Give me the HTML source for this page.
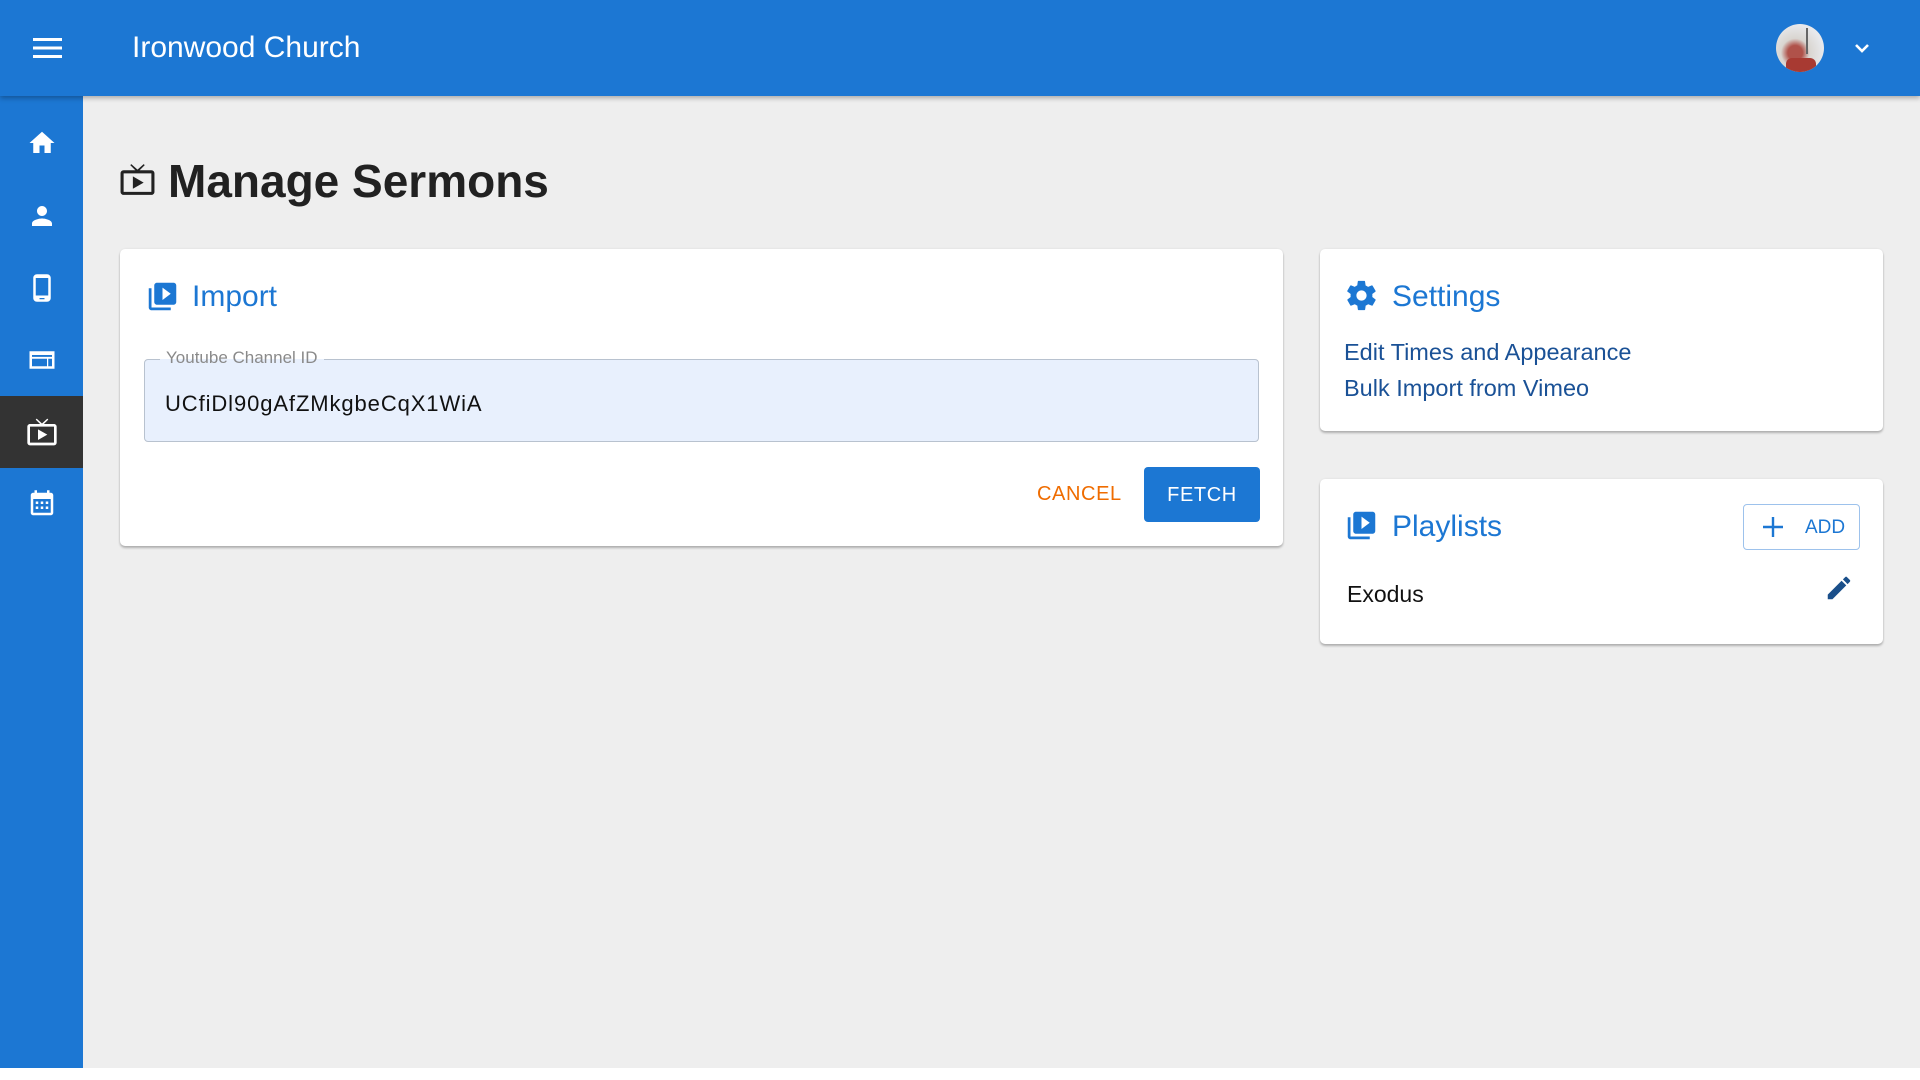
<!DOCTYPE html>
<html><head><meta charset="utf-8"><style>
*{box-sizing:border-box;margin:0;padding:0}
body{width:1920px;height:1080px;background:#fff;font-family:"Liberation Sans",sans-serif;position:relative;overflow:hidden}
.main{position:absolute;left:0;top:0;width:1920px;height:1068px;background:#eeeeee}
.hdr{position:absolute;left:0;top:0;width:1920px;height:96px;background:#1c77d3;box-shadow:0 2px 5px rgba(0,0,0,.3);z-index:2}
.side{position:absolute;left:0;top:96px;width:83px;height:972px;background:#1c77d3}
.abs{position:absolute}
.card{position:absolute;background:#fff;border-radius:5px;box-shadow:0 2px 2px rgba(0,0,0,.25),0 0 2px rgba(0,0,0,.08)}
.h{position:absolute;color:#1c77d3;font-size:30px}
.lnk{position:absolute;color:#1a5196;font-size:23.5px}
</style></head><body>
<div class="main"></div>
<div class="hdr">
 <svg class="abs" style="left:33px;top:37px" width="30" height="22" viewBox="0 0 30 22"><rect y="1" width="29" height="3" fill="#fff"/><rect y="9.5" width="29" height="3" fill="#fff"/><rect y="18" width="29" height="3" fill="#fff"/></svg>
 <div class="abs" style="left:132px;top:31px;color:#fff;font-size:30px">Ironwood Church</div>
 <div class="abs" style="left:1776px;top:24px;width:48px;height:48px;border-radius:50%;background:radial-gradient(circle at 40% 60%,#b0524a 0 18%,#d9d5d0 35%,#e8e9ec 70%);overflow:hidden"><div style="position:absolute;left:10px;top:34px;width:30px;height:14px;background:#a83a32;border-radius:6px 6px 0 0"></div><div style="position:absolute;left:30px;top:4px;width:2px;height:26px;background:#666"></div></div>
 <svg class="abs" style="left:1853px;top:41px" width="18" height="14" viewBox="0 0 18 14"><path d="M3 4l6 6 6-6" stroke="#fff" stroke-width="2.6" fill="none"/></svg>
</div>
<div class="side">
 <div class="abs" style="left:0;top:300px;width:83px;height:72px;background:#333"></div>
 <svg class="abs" style="left:27px;top:32px" width="30" height="30" viewBox="0 0 24 24"><path d="M10 20v-6h4v6h5v-8h3L12 3 2 12h3v8z" fill="#fff"/></svg>
 <svg class="abs" style="left:27px;top:105px" width="30" height="30" viewBox="0 0 24 24"><path d="M12 12c2.2 0 4-1.8 4-4s-1.8-4-4-4-4 1.8-4 4 1.8 4 4 4zm0 2c-2.7 0-8 1.3-8 4v2h16v-2c0-2.7-5.3-4-8-4z" fill="#fff"/></svg>
 <svg class="abs" style="left:27px;top:177px" width="30" height="30" viewBox="0 0 24 24"><path d="M16 1H8C6.3 1 5 2.3 5 4v16c0 1.7 1.3 3 3 3h8c1.7 0 3-1.3 3-3V4c0-1.7-1.3-3-3-3zm-2 20h-4v-1h4v1zm3-3H7V4h10v14z" fill="#fff"/></svg>
 <svg class="abs" style="left:27px;top:249px" width="30" height="30" viewBox="0 0 24 24"><path d="M2 5h20v14H2z" fill="#fff"/><path d="M4 11h12v6H4zM17 11h3v6h-3zM4 8h16v1.5H4z" fill="#1c77d3"/></svg>
 <svg class="abs" style="left:26px;top:320px" width="32" height="32" viewBox="0 0 24 24"><path d="M21 6h-7.6l3.3-3.3-.7-.7L12 5.6 8 2l-.7.7L10.6 6H3c-1.1 0-2 .9-2 2v12c0 1.1.9 2 2 2h18c1.1 0 2-.9 2-2V8c0-1.1-.9-2-2-2zm0 14H3V8h18v12zM9 10v8l7-4z" fill="#fff"/></svg>
 <svg class="abs" style="left:27px;top:393px" width="30" height="30" viewBox="0 0 24 24"><path d="M19 3h-1V1h-2v2H8V1H6v2H5C3.9 3 3 3.9 3 5v14c0 1.1.9 2 2 2h14c1.1 0 2-.9 2-2V5c0-1.1-.9-2-2-2zm0 16H5V8h14v11zM7 10h2v2H7zm4 0h2v2h-2zm4 0h2v2h-2zM7 14h2v2H7zm4 0h2v2h-2zm4 0h2v2h-2z" fill="#fff"/></svg>
</div>
<svg class="abs" style="left:119px;top:161px" width="37" height="37" viewBox="0 0 24 24"><path d="M21 6h-7.6l3.3-3.3-.7-.7L12 5.6 8 2l-.7.7L10.6 6H3c-1.1 0-2 .9-2 2v12c0 1.1.9 2 2 2h18c1.1 0 2-.9 2-2V8c0-1.1-.9-2-2-2zm0 14H3V8h18v12zM9 10v8l7-4z" fill="#222"/></svg>
<div class="abs" style="left:168px;top:154px;font-size:46px;font-weight:bold;color:#212121">Manage Sermons</div>

<div class="card" style="left:120px;top:249px;width:1163px;height:297px">
 <svg class="abs" style="left:26px;top:31px" width="33" height="33" viewBox="0 0 24 24"><path d="M4 6H2v14c0 1.1.9 2 2 2h14v-2H4V6zm16-4H8c-1.1 0-2 .9-2 2v12c0 1.1.9 2 2 2h12c1.1 0 2-.9 2-2V4c0-1.1-.9-2-2-2zm-8 12.5v-9l6 4.5-6 4.5z" fill="#1c77d3"/></svg>
 <div class="h" style="left:72px;top:31px">Import</div>
 <div class="abs" style="left:24px;top:110px;width:1115px;height:83px;background:#e8f0fd;border:1px solid #b8c2cf;border-radius:4px"></div>
 <div class="abs" style="left:40px;top:99px;padding:0 6px;font-size:17px;color:#8a8a8a;line-height:20px;background:linear-gradient(#fff 55%,#e8f0fd 55%)">Youtube Channel ID</div>
 <div class="abs" style="left:45px;top:142px;font-size:22px;letter-spacing:.9px;color:#111">UCfiDl90gAfZMkgbeCqX1WiA</div>
 <div class="abs" style="left:917px;top:234px;font-size:20px;color:#ef6c00;letter-spacing:.6px">CANCEL</div>
 <div class="abs" style="left:1024px;top:218px;width:116px;height:55px;background:#1c77d3;border-radius:4px;color:#fff;font-size:20px;text-align:center;line-height:57px;letter-spacing:.6px">FETCH</div>
</div>

<div class="card" style="left:1320px;top:249px;width:563px;height:182px">
 <svg class="abs" style="left:24px;top:29px" width="35" height="35" viewBox="0 0 24 24"><path d="M19.4 13c.04-.3.06-.6.06-1s-.02-.7-.06-1l2.1-1.6c.2-.15.25-.42.12-.64l-2-3.460c-.12-.22-.39-.3-.61-.22l-2.5 1c-.52-.4-1.08-.73-1.690-.98l-.38-2.65C14.4 2.2 14.2 2 13.95 2h-4c-.25 0-.46.18-.49.42l-.38 2.65c-.61.25-1.17.59-1.69.98l-2.5-1c-.23-.09-.49 0-.61.22l-2 3.46c-.13.22-.07.49.12.64L4.57 11c-.04.32-.07.65-.07 1s.03.68.07 1l-2.11 1.65c-.19.15-.24.42-.12.64l2 3.46c.12.22.39.3.61.22l2.49-1c.52.4 1.08.73 1.69.98l.38 2.65c.03.24.24.42.49.42h4c.25 0 .46-.18.49-.42l.38-2.65c.61-.25 1.17-.59 1.69-.98l2.49 1c.23.09.49 0 .61-.22l2-3.46c.12-.22.07-.49-.12-.64L19.4 13zM12 15.5c-1.93 0-3.5-1.57-3.5-3.5s1.57-3.5 3.5-3.5 3.5 1.57 3.5 3.5-1.57 3.5-3.5 3.5z" fill="#1c77d3"/></svg>
 <div class="h" style="left:72px;top:31px">Settings</div>
 <div class="lnk" style="left:24px;top:90px">Edit Times and Appearance</div>
 <div class="lnk" style="left:24px;top:126px">Bulk Import from Vimeo</div>
</div>

<div class="card" style="left:1320px;top:479px;width:563px;height:165px">
 <svg class="abs" style="left:25px;top:30px" width="33" height="33" viewBox="0 0 24 24"><path d="M4 6H2v14c0 1.1.9 2 2 2h14v-2H4V6zm16-4H8c-1.1 0-2 .9-2 2v12c0 1.1.9 2 2 2h12c1.1 0 2-.9 2-2V4c0-1.1-.9-2-2-2zm-8 12.5v-9l6 4.5-6 4.5z" fill="#1c77d3"/></svg>
 <div class="h" style="left:72px;top:31px">Playlists</div>
 <div class="abs" style="left:423px;top:25px;width:117px;height:46px;border:1px solid #9dc2ec;border-radius:4px"></div>
 <svg class="abs" style="left:442px;top:37px" width="22" height="22" viewBox="0 0 22 22"><path d="M11 1v20M1 11h20" stroke="#1c77d3" stroke-width="2.4"/></svg>
 <div class="abs" style="left:485px;top:38px;color:#1c77d3;font-size:19px">ADD</div>
 <div class="abs" style="left:27px;top:102px;font-size:23px;color:#111">Exodus</div>
 <svg class="abs" style="left:504px;top:94px" width="30" height="30" viewBox="0 0 24 24"><path d="M3 17.25V21h3.75L17.81 9.94l-3.75-3.75L3 17.25zM20.71 7.04a1 1 0 000-1.41l-2.34-2.34a1 1 0 00-1.41 0l-1.83 1.83 3.75 3.75 1.83-1.83z" fill="#1a4f8a"/></svg>
</div>
</body></html>
